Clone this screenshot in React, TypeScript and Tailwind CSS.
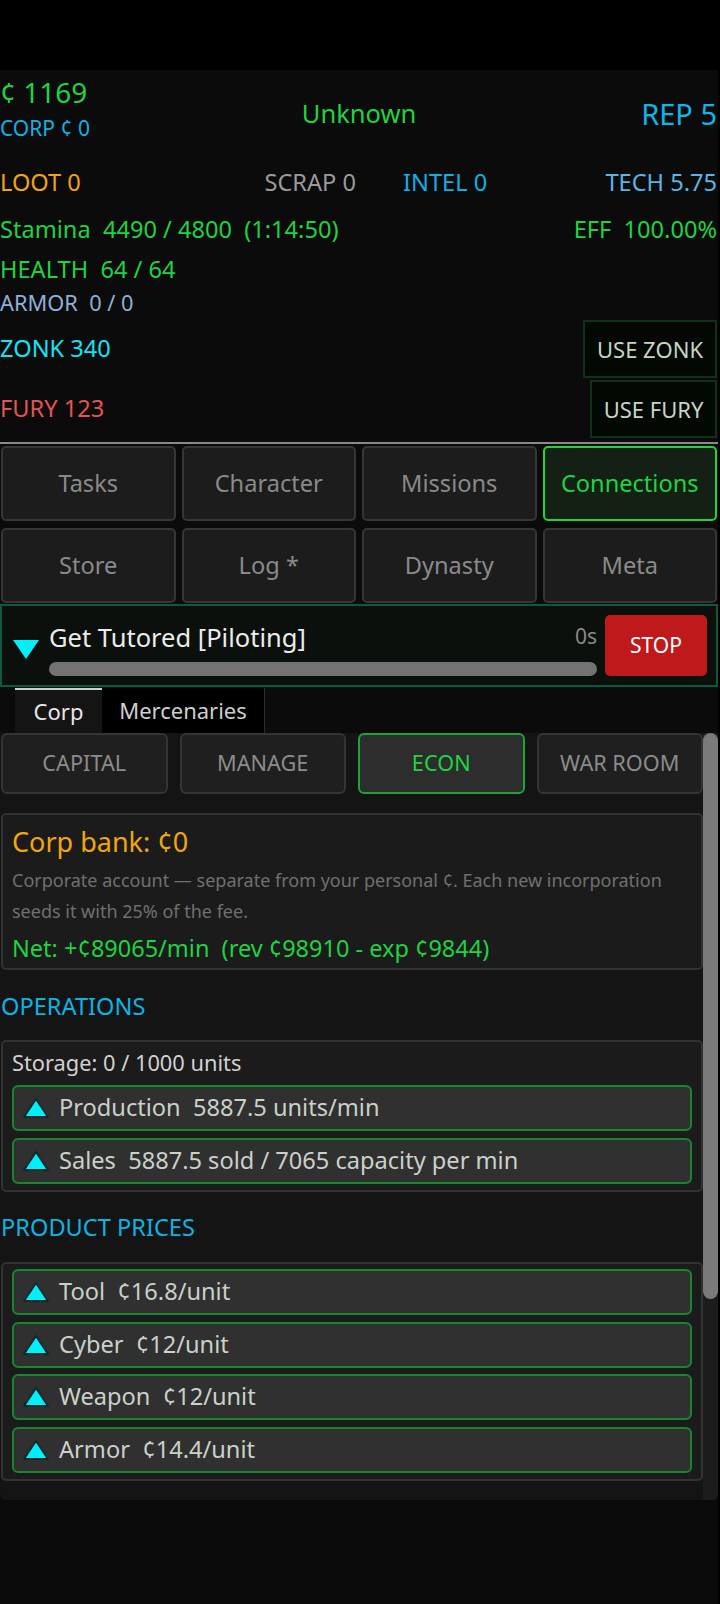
import React from "react";

const GREEN = "text-[#1fd342]";

type NavItem = { label: string; active?: boolean };

const navTabs: NavItem[] = [
  { label: "Tasks" },
  { label: "Character" },
  { label: "Missions" },
  { label: "Connections", active: true },
  { label: "Store" },
  { label: "Log *" },
  { label: "Dynasty" },
  { label: "Meta" },
];

const corpViews: NavItem[] = [
  { label: "CAPITAL" },
  { label: "MANAGE" },
  { label: "ECON", active: true },
  { label: "WAR ROOM" },
];

const prices = [
  "Tool  ¢16.8/unit",
  "Cyber  ¢12/unit",
  "Weapon  ¢12/unit",
  "Armor  ¢14.4/unit",
];

const UpArrow = () => (
  <svg width="28" height="22" viewBox="0 0 28 22" className="shrink-0">
    <polygon
      points="14,2 26,20 2,20"
      fill="#00f0fa"
      stroke="#0d2a2c"
      strokeWidth="2"
      strokeLinejoin="round"
    />
  </svg>
);

const TrendRow = ({ text }: { text: string }) => (
  <div className="flex h-[46px] items-center gap-[9px] rounded-[6px] border-2 border-[#17872f] bg-[#303030] pl-[8px]">
    <UpArrow />
    <span className="whitespace-pre text-[23.6px] text-[#c9d1c9]">{text}</span>
  </div>
);

const NavTab = ({ label, active }: NavItem) => (
  <div
    className={
      active
        ? "flex h-[75px] items-center justify-center rounded-[5px] border-2 border-[#1fd342] bg-[#142014] text-[23.6px] text-[#1fd342]"
        : "flex h-[75px] items-center justify-center rounded-[5px] border-2 border-[#363636] bg-[#1c1c1c] text-[23.6px] text-[#8a8a8a]"
    }
  >
    {label}
  </div>
);

const ViewButton = ({ label, active }: NavItem) => (
  <div
    className={
      active
        ? "flex h-[61px] items-center justify-center rounded-[6px] border-2 border-[#1ea33a] bg-[#2d2d2d] text-[21.7px] text-[#1fd342]"
        : "flex h-[61px] items-center justify-center rounded-[6px] border-2 border-[#343434] bg-[#1f1f1f] text-[21.7px] text-[#8c8c8c]"
    }
  >
    {label}
  </div>
);

export default function App() {
  return (
    <div className="min-h-[1604px] w-[720px] bg-black font-['Noto_Sans',sans-serif]">
      <div className="h-[70px]" />
      <div className="min-h-[1534px] w-[718px] bg-[#0b0b0b]">
        {/* wallet / rep */}
        <div className="flex h-[87px] items-start">
          <div className="w-[200px] pt-[4px]">
            <div className={`text-[28px] leading-[36px] ${GREEN}`}>¢ 1169</div>
            <div className="mt-[3px] text-[21px] leading-[30px] text-[#10b2e2]">CORP ¢ 0</div>
          </div>
          <div className={`flex-1 self-center text-center text-[25.5px] ${GREEN}`}>Unknown</div>
          <div className="w-[200px] self-center pr-[1px] text-right text-[29px] text-[#12b6e6]">REP 5</div>
        </div>

        {/* resources */}
        <div className="grid h-[52px] grid-cols-4 items-center text-[23.6px]">
          <div className="text-[#f0a414]">LOOT 0</div>
          <div className="pr-[3px] text-right text-[#9a9a9a]">SCRAP 0</div>
          <div className="pl-[44px] text-[#12b0e0]">INTEL 0</div>
          <div className="pr-[1px] text-right text-[#5cb4e2]">TECH 5.75</div>
        </div>

        <div className={`flex h-[42px] items-center justify-between whitespace-pre text-[23.6px] ${GREEN}`}>
          <span>Stamina  4490 / 4800  (1:14:50)</span>
          <span className="pr-[1px]">EFF  100.00%</span>
        </div>
        <div className={`flex h-[38px] items-center whitespace-pre text-[23.6px] ${GREEN}`}>HEALTH  64 / 64</div>
        <div className="flex h-[29px] items-center whitespace-pre text-[21.8px] text-[#8fb0d8]">ARMOR  0 / 0</div>

        <div className="mt-[2px] flex h-[58px] items-center justify-between">
          <span className="text-[23.6px] text-[#14e4f2]">ZONK 340</span>
          <button className="mr-[1px] h-[58px] w-[134px] border-2 border-[#10301a] bg-[#030803] text-[22px] text-[#c6d6c6]">
            USE ZONK
          </button>
        </div>
        <div className="mt-[2px] flex h-[58px] items-center justify-between">
          <span className="text-[23.6px] text-[#e35454]">FURY 123</span>
          <button className="mr-[1px] h-[58px] w-[127px] border-2 border-[#10301a] bg-[#030803] text-[22px] text-[#c6d6c6]">
            USE FURY
          </button>
        </div>
        <div className="mt-[4px] h-[2px] bg-[#8a8a8a]" />

        {/* main nav */}
        <div className="mt-[2px] grid grid-cols-4 gap-x-[6px] gap-y-[7px] px-[1px]">
          {navTabs.map((t) => (
            <NavTab key={t.label} {...t} />
          ))}
        </div>

        {/* current task */}
        <div className="mt-[1px] flex h-[83px] items-end border-2 border-[#0e5a3c] bg-[#0b100c] pb-[9px]">
          <svg width="26" height="19" viewBox="0 0 26 19" className="mb-[17px] ml-[11px] shrink-0">
            <polygon points="0,0 26,0 13,19" fill="#00f0fa" />
          </svg>
          <div className="ml-[10px] flex-1">
            <div className="flex h-[30px] items-center justify-between">
              <span className="text-[25.5px] text-[#ececec]">Get Tutored [Piloting]</span>
              <span className="text-[21px] text-[#8a8a8a]">0s</span>
            </div>
            <div className="mt-[10px] h-[14px] rounded-full bg-[#737373]" />
          </div>
          <button className="ml-[8px] mr-[9px] h-[61px] w-[102px] rounded-[5px] bg-[#c0191b] text-[21px] text-white">
            STOP
          </button>
        </div>

        {/* sub tabs */}
        <div className="mt-[1px] flex h-[45px] pl-[15px]">
          <div className="flex w-[87px] items-center justify-center border-t-2 border-[#cfcfcf] bg-[#141414] text-[22px] text-[#e6e6e6]">
            Corp
          </div>
          <div className="flex w-[163px] items-center justify-center border-r border-[#2c2c2c] bg-black text-[22px] text-[#cfcfcf]">
            Mercenaries
          </div>
        </div>

        {/* corp panel */}
        <div className="flex h-[767px] rounded-b-[6px] bg-[#141414]">
          <div className="w-[703px] pl-[1px]">
            <div className="grid grid-cols-4 gap-[12px]">
              {corpViews.map((v) => (
                <ViewButton key={v.label} {...v} />
              ))}
            </div>

            <div className="mt-[19px] h-[157px] rounded-[5px] border-2 border-[#323232] bg-[#1b1b1b] px-[9px] pt-[10px]">
              <div className="text-[27px] leading-[34px] text-[#f2a60c]">Corp bank: ¢0</div>
              <div className="mt-[6px] text-[18px] leading-[31px] text-[#707070]">
                Corporate account — separate from your personal ¢. Each new incorporation seeds it with 25% of the fee.
              </div>
              <div className={`mt-[5px] whitespace-pre text-[23.5px] leading-[32px] ${GREEN}`}>
                Net: +¢89065/min  (rev ¢98910 - exp ¢9844)
              </div>
            </div>

            <div className="mt-[21px] flex h-[32px] items-center text-[23.6px] text-[#10b2e2]">OPERATIONS</div>
            <div className="mt-[17px] rounded-[5px] border-2 border-[#323232] bg-[#1b1b1b] px-[9px] pb-[6px] pt-[9px]">
              <div className="text-[21.8px] leading-[24px] text-[#d2d2d2]">Storage: 0 / 1000 units</div>
              <div className="mt-[10px] flex flex-col gap-[7px]">
                <TrendRow text="Production  5887.5 units/min" />
                <TrendRow text="Sales  5887.5 sold / 7065 capacity per min" />
              </div>
            </div>

            <div className="mt-[20px] flex h-[32px] items-center text-[23.6px] text-[#10b2e2]">PRODUCT PRICES</div>
            <div className="mt-[18px] flex flex-col gap-[6.5px] rounded-[5px] border-2 border-[#323232] bg-[#1b1b1b] px-[9px] pb-[6px] pt-[5px]">
              {prices.map((p) => (
                <TrendRow key={p} text={p} />
              ))}
            </div>
          </div>

          {/* scrollbar */}
          <div className="w-[15px] rounded-br-[6px] bg-[#1c1c1c]">
            <div className="h-[566px] rounded-full bg-[#7a7a7a]" />
          </div>
        </div>
      </div>
    </div>
  );
}
